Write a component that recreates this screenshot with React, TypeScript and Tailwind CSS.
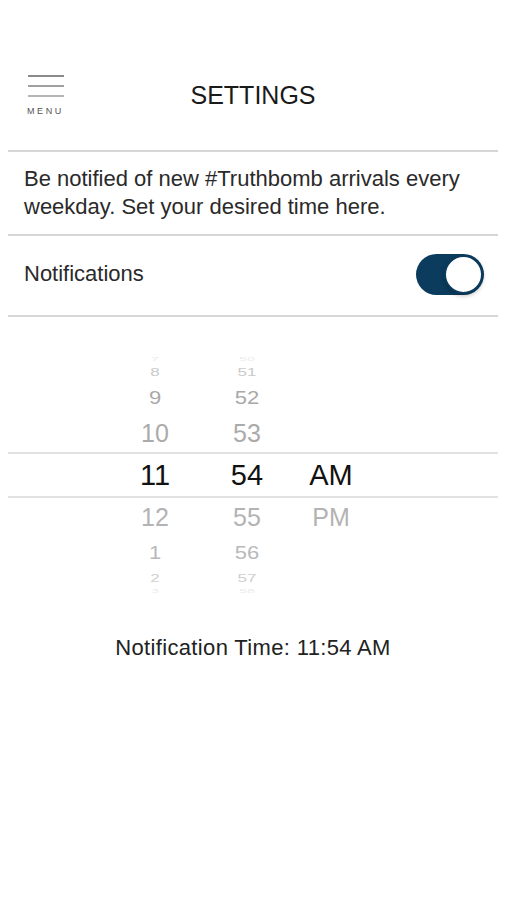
import { useState } from "react";

const rows = [
  { h: "7", m: "50", ap: "", height: "h-[10px]", text: "text-[14px] text-[#ececec] scale-y-[0.35]" },
  { h: "8", m: "51", ap: "", height: "h-[17px]", text: "text-[17px] text-[#c9c9c9] scale-y-[0.6]" },
  { h: "9", m: "52", ap: "", height: "h-[33px]", text: "text-[22px] text-[#a9a9a9] scale-y-[0.85]" },
  { h: "10", m: "53", ap: "", height: "h-[38px]", text: "text-[25px] text-[#ababab]" },
  { h: "11", m: "54", ap: "AM", height: "h-[46px]", text: "text-[29px] text-[#111]", selected: true },
  { h: "12", m: "55", ap: "PM", height: "h-[39px]", text: "text-[25px] text-[#b3b3b3]" },
  { h: "1", m: "56", ap: "", height: "h-[32px]", text: "text-[22px] text-[#b9b9b9] scale-y-[0.85]" },
  { h: "2", m: "57", ap: "", height: "h-[18px]", text: "text-[17px] text-[#cfcfcf] scale-y-[0.6]" },
  { h: "3", m: "58", ap: "", height: "h-[8px]", text: "text-[14px] text-[#ececec] scale-y-[0.35]" },
];

export default function App() {
  const [enabled, setEnabled] = useState(true);

  return (
    <div className="w-[506px] h-[900px] bg-white font-['Liberation_Sans',Arial,sans-serif] text-[#222]">
      {/* Header */}
      <div className="relative h-[150px] pt-[66px]">
        <div className="flex items-start">
          <button className="ml-[26px] mt-[9px] flex flex-col items-start">
            <span className="block ml-[2px] w-[36px] h-[2px] bg-[#8a8a8a]" />
            <span className="block ml-[2px] w-[36px] h-[2px] bg-[#a0a0a0] mt-[8px]" />
            <span className="block ml-[2px] w-[36px] h-[2px] bg-[#b5b5b5] mt-[8px]" />
            <span className="mt-[10px] text-[9px] leading-none tracking-[2.6px] text-[#555] pl-[1px]">MENU</span>
          </button>
          <h1 className="absolute left-0 right-0 top-[80px] text-center text-[25px] leading-[30px] text-[#1a1a1a]">
            SETTINGS
          </h1>
        </div>
      </div>

      <div className="mx-[8px] h-[2px] bg-[#d6d6d6]" />

      {/* Description */}
      <div className="px-[24px] pt-[13px] h-[82px]">
        <p className="text-[22px] leading-[28px] text-[#2a2a2a]">
          Be notified of new #Truthbomb arrivals every weekday. Set your desired time here.
        </p>
      </div>

      <div className="mx-[8px] h-[2px] bg-[#d6d6d6]" />

      {/* Notifications toggle */}
      <div className="flex items-center justify-between h-[79px] pl-[24px] pr-[22px] pb-[3px]">
        <span className="text-[22px] leading-[28px] text-[#2a2a2a]">Notifications</span>
        <button
          onClick={() => setEnabled(!enabled)}
          className={`relative w-[68px] h-[41px] rounded-full ${enabled ? "bg-[#0b3c5d]" : "bg-[#e5e5e5]"}`}
        >
          <span
            className={`absolute top-[1px] w-[39px] h-[39px] rounded-full bg-white border-[2px] border-[#0b3c5d] shadow-[0_2px_4px_rgba(0,0,0,0.25)] ${enabled ? "right-[1px]" : "left-[1px]"}`}
          />
        </button>
      </div>

      <div className="mx-[8px] h-[2px] bg-[#d6d6d6]" />

      {/* Time picker */}
      <div className="mt-[37px] flex flex-col">
        {rows.map((r, i) => (
          <div
            key={i}
            className={`flex items-center ${r.height} ${r.selected ? "mx-[8px] border-y-[2px] border-[#e2e2e2]" : ""}`}
          >
            <div className="flex items-center w-full">
              <div className={`${r.selected ? "ml-[107px]" : "ml-[115px]"} w-[80px] text-center leading-none ${r.text}`}>{r.h}</div>
              <div className={`ml-[12px] w-[80px] text-center leading-none ${r.text}`}>{r.m}</div>
              <div className={`ml-[4px] w-[80px] text-center leading-none ${r.text}`}>{r.ap}</div>
            </div>
          </div>
        ))}
      </div>

      <p className="mt-[39px] text-center text-[22px] leading-[28px] tracking-[0.35px] text-[#222]">
        Notification Time: 11:54 AM
      </p>
    </div>
  );
}
